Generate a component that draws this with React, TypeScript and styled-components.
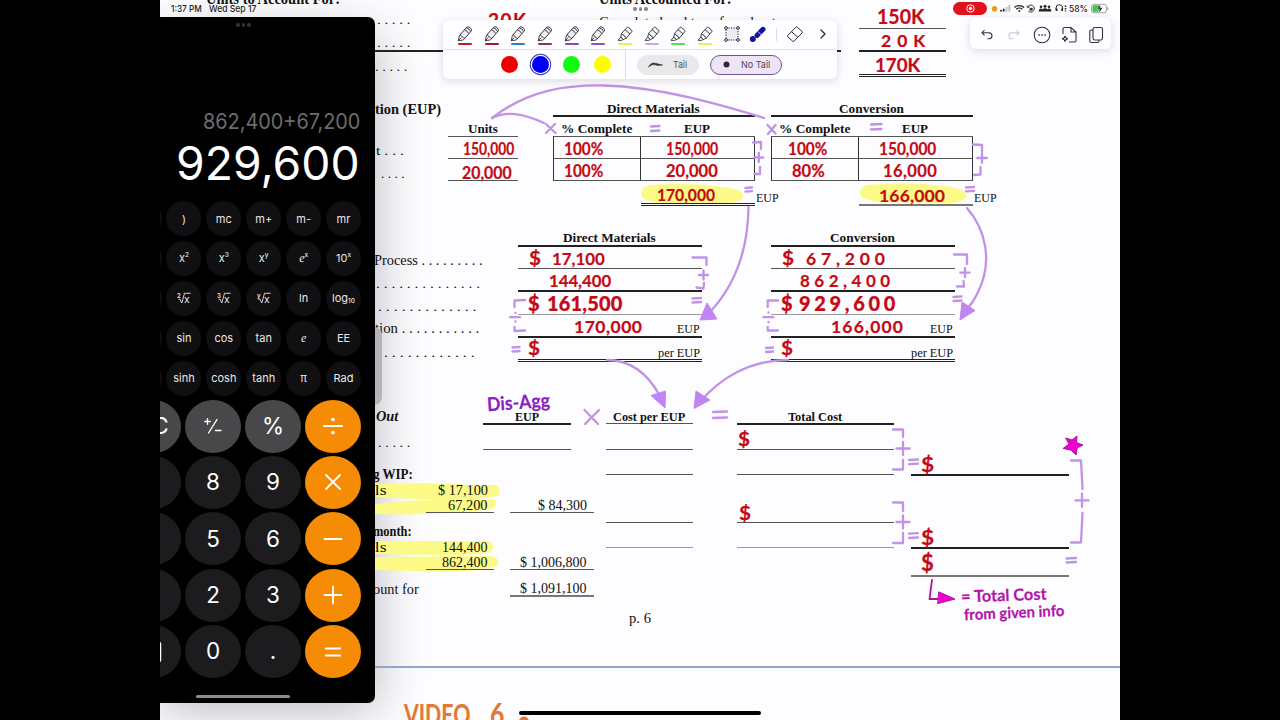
import React, { useLayoutEffect, useRef, useState } from 'react';
import styled, { createGlobalStyle, css } from 'styled-components';

const SERIF = '"Liberation Serif", "Times New Roman", serif';
const SANS = 'Inter, "Liberation Sans", sans-serif';
const HAND = 'Lato, "Open Sans", sans-serif';
const RED = '#c40a14';
const LILAC = '#c193e6';

const Global = createGlobalStyle`
  *, *::before, *::after { box-sizing: border-box; }
  body { margin: 0; background: #000; overflow: hidden; }
`;

/* ---------- text that fills a given width ---------- */

const FitBox = styled.span<{ $w: number; $ml?: number; $up?: number; $tilt?: number }>`
  display: block;
  flex: none;
  width: ${p => p.$w}px;
  margin-left: ${p => p.$ml || 0}px;
  margin-bottom: ${p => p.$up || 0}px;
  transform: rotate(${p => p.$tilt || 0}deg);
  white-space: pre;
  line-height: 1;
`;

const FitInner = styled.span`
  display: inline-block;
  vertical-align: top;
  transform-origin: 0 50%;
`;

const PrintBox = styled(FitBox)<{ $size?: number; $bold?: boolean; $italic?: boolean }>`
  font-family: ${SERIF};
  font-size: ${p => p.$size || 13.5}px;
  font-weight: ${p => (p.$bold ? 700 : 400)};
  font-style: ${p => (p.$italic ? 'italic' : 'normal')};
  color: #111;
`;

const InkBox = styled(FitBox)<{ $size?: number; $color?: string; $heavy?: boolean }>`
  font-family: ${HAND};
  font-size: ${p => p.$size || 17.5}px;
  font-weight: ${p => (p.$heavy ? 900 : 700)};
  color: ${p => p.$color || RED};
  -webkit-text-stroke: 0.2px ${p => p.$color || RED};
`;

const UiBox = styled(FitBox)<{ $size?: number; $color?: string; $weight?: number }>`
  font-family: ${SANS};
  font-size: ${p => p.$size || 10}px;
  font-weight: ${p => p.$weight || 400};
  color: ${p => p.$color || '#fff'};
`;

/* Narrow text is squeezed; wide handwriting is spread letter by letter. */
function Fitted({ text, spread }: { text: string; spread?: boolean }) {
  const ref = useRef<HTMLSpanElement>(null);
  const [fit, setFit] = useState<React.CSSProperties>({});
  useLayoutEffect(() => {
    const el = ref.current;
    if (!el || !el.parentElement) return;
    const target = el.parentElement.offsetWidth;
    const natural = el.offsetWidth;
    if (spread && target > natural && text.length > 1) {
      setFit({ letterSpacing: `${(target - natural) / (text.length - 1)}px` });
    } else {
      setFit({ transform: `scaleX(${target / natural})` });
    }
  }, [text, spread]);
  return <FitInner ref={ref} style={fit}>{text}</FitInner>;
}

type Common = { t: string; w: number; ml?: number; up?: number; tilt?: number; size?: number };

const Print = ({ t, w, ml, up, tilt, size, bold, italic }: Common & { bold?: boolean; italic?: boolean }) => (
  <PrintBox $w={w} $ml={ml} $up={up} $tilt={tilt} $size={size} $bold={bold} $italic={italic}><Fitted text={t} /></PrintBox>
);
const Ink = ({ t, w, ml, up, tilt, size, color, heavy }: Common & { color?: string; heavy?: boolean }) => (
  <InkBox $w={w} $ml={ml} $up={up} $tilt={tilt} $size={size} $color={color} $heavy={heavy}><Fitted text={t} spread /></InkBox>
);
const Ui = ({ t, w, ml, up, size, color, weight }: Common & { color?: string; weight?: number }) => (
  <UiBox $w={w} $ml={ml} $up={up} $size={size} $color={color} $weight={weight}><Fitted text={t} /></UiBox>
);

/* ---------- page shell ---------- */

const Stage = styled.div`
  width: 1280px;
  height: 720px;
  display: flex;
  justify-content: center;
  background: #000;
`;

const Tablet = styled.div`
  position: relative;
  width: 960px;
  height: 720px;
  overflow: hidden;
  background: #fdfcfe;
`;

const Sheet = styled.main`
  position: relative;
  display: flex;
  flex-direction: column;
`;

const Section = styled.section<{ $h: number; $pl?: number }>`
  display: flex;
  align-items: flex-start;
  flex: none;
  height: ${p => p.$h}px;
  padding-left: ${p => p.$pl || 0}px;
`;

const Column = styled.div<{ $w: number; $ml?: number; $pt?: number }>`
  display: flex;
  flex-direction: column;
  flex: none;
  width: ${p => p.$w}px;
  margin-left: ${p => p.$ml || 0}px;
  padding-top: ${p => p.$pt || 0}px;
`;

type Rule = 'thin' | 'thick' | 'double' | 'soft' | 'gray';
const rules: Record<Rule, string> = {
  thin: '1px solid #555',
  thick: '2px solid #222',
  double: '3px double #222',
  soft: '1px solid #999',
  gray: '2px solid #777',
};

const Row = styled.div<{ $h: number; $rule?: Rule; $w?: number; $ml?: number; $pad?: number; $end?: boolean }>`
  display: flex;
  align-items: flex-end;
  justify-content: ${p => (p.$end ? 'flex-end' : 'flex-start')};
  flex: none;
  height: ${p => p.$h}px;
  width: ${p => (p.$w ? `${p.$w}px` : 'auto')};
  margin-left: ${p => p.$ml || 0}px;
  padding-right: ${p => p.$pad || 0}px;
  border-bottom: ${p => (p.$rule ? rules[p.$rule] : 'none')};
`;

const Cell = styled(Row)<{ $first?: boolean }>`
  border-right: 1px solid #333;
  ${p => p.$first && css`border-left: 1px solid #333;`}
`;

const Pair = styled.div`
  display: flex;
  align-items: flex-end;
`;

const PageEdge = styled.hr`
  width: 100%;
  height: 2px;
  margin: 0;
  border: 0;
  background: #8fa8c9;
`;

const Layer = styled.svg`
  position: absolute;
  left: 0;
  top: 0;
  pointer-events: none;
`;

const Note = styled.div<{ $x: number; $y: number }>`
  position: absolute;
  left: ${p => p.$x - 160}px;
  top: ${p => p.$y}px;
  display: flex;
`;

/* ---------- worksheet sections ---------- */

const dots = (n: number) => Array(n).fill('.').join(' ');

function UnitsSection() {
  return (
    <Section $h={100} $pl={46}>
      <Column $w={282}>
        <Row $h={7}><Print t="Units to Account For:" w={134} size={16} bold /></Row>
        <Row $h={19}><Print t="Beginning Work in P" w={134} size={15} up={-4} /><Print t={dots(5)} w={33} ml={37} /></Row>
        <Row $h={26} $rule="thick"><Print t={dots(5)} w={33} ml={171} up={1} /></Row>
        <Row $h={21}><Print t={dots(5)} w={32} ml={169} /></Row>
      </Column>
      <Column $w={60} $pt={9}>
        <Row $h={20}><Ink t="20K" w={38} size={19} /></Row>
      </Column>
      <Column $w={242} $ml={51}>
        <Row $h={7}><Print t="Units Accounted For:" w={133} size={16} bold /></Row>
        <Row $h={19}><Print t="Completed and transferred out" w={177} size={15} up={-4} /></Row>
        <Row $h={26} $rule="thick" />
      </Column>
      <Column $w={87} $ml={18}>
        <Row $h={29} $rule="thin"><Ink t="150K" w={48} ml={18} up={2} size={20} /></Row>
        <Row $h={23} $rule="thick"><Ink t="20K" w={44} ml={22} up={1} size={17.5} /></Row>
        <Row $h={25} $rule="double"><Ink t="170K" w={45} ml={16} size={19.5} /></Row>
      </Column>
    </Section>
  );
}

type EupProps = { title: string; titleX: number; titleW: number; ml: number; rows: [string, number, number, string, number, number][]; total: [string, number, number]; rule: Rule };

function EupTable({ title, titleX, titleW, ml, rows, total, rule }: EupProps) {
  return (
    <Column $w={202} $ml={ml}>
      <Row $h={17} $rule="thick"><Print t={title} w={titleW} ml={titleX} bold /></Row>
      <Row $h={20} $rule="thin"><Print t="% Complete" w={71} ml={8} bold up={1} /><Print t="EUP" w={26} ml={52} bold up={1} /></Row>
      {rows.map(([pct, px, pw, units, ux, uw], i) => (
        <Pair key={i}>
          <Cell $first $h={22} $w={88} $rule="thin"><Ink t={pct} w={pw} ml={px} up={1} size={16.5} /></Cell>
          <Cell $h={22} $w={114} $rule="thin"><Ink t={units} w={uw} ml={ux} up={1} size={16.5} /></Cell>
        </Pair>
      ))}
      <Pair>
        <Row $h={25} $w={114} $ml={88} $rule={rule}><Ink t={total[0]} w={total[2]} ml={total[1]} size={17.5} /></Row>
        <Print t="EUP" w={23} ml={1} up={2} />
      </Pair>
    </Column>
  );
}

function EquivalentUnits() {
  return (
    <Section $h={130} $pl={215}>
      <Column $w={66}>
        <Row $h={16}><Print t="tion (EUP)" w={66} size={15.5} bold /></Row>
        <Row $h={41}><Print t="t . . ." w={28} ml={1} /></Row>
        <Row $h={23}><Print t={dots(4)} w={24} ml={6} /></Row>
      </Column>
      <Column $w={70} $ml={7}>
        <Row $h={37} $rule="thin"><Print t="Units" w={30} ml={20} bold up={1} /></Row>
        <Row $h={22} $rule="thin"><Ink t="150,000" w={51} ml={15} up={1} size={16.5} /></Row>
        <Row $h={22} $rule="thin"><Ink t="20,000" w={50} ml={14} up={-1} size={16.5} /></Row>
      </Column>
      <EupTable title="Direct Materials" titleX={54} titleW={93} ml={35} rule="double"
        rows={[['100%', 10, 39, '150,000', 25, 52], ['100%', 10, 39, '20,000', 25, 52]]} total={['170,000', 16, 58]} />
      <EupTable title="Conversion" titleX={68} titleW={65} ml={16} rule="gray"
        rows={[['100%', 16, 39, '150,000', 20, 57], ['80%', 20, 33, '16,000', 24, 54]]} total={['166,000', 20, 66]} />
    </Section>
  );
}

type CostItem = { text: string; x: number; w: number };
function CostTable({ title, titleX, titleW, ml, items }: { title: string; titleX: number; titleW: number; ml: number; items: CostItem[] }) {
  const [a, b, c, d] = items;
  return (
    <Column $w={184} $ml={ml}>
      <Row $h={17} $rule="thick"><Print t={title} w={titleW} ml={titleX} bold up={1} /></Row>
      <Row $h={22} $rule="thin"><Ink t="$" w={12} ml={11} up={1} size={19} /><Ink t={a.text} w={a.w} ml={a.x - 23} up={1} size={17.5} /></Row>
      <Row $h={23} $rule="thick"><Ink t={b.text} w={b.w} ml={b.x} up={1} size={17} /></Row>
      <Row $h={23} $rule="soft"><Ink t="$" w={12} ml={10} up={1} size={20} heavy /><Ink t={c.text} w={c.w} ml={c.x - 22} up={1} size={20} heavy /></Row>
      <Row $h={23} $rule="thick"><Ink t={d.text} w={d.w} ml={d.x} up={1} size={17.5} /><Print t="EUP" w={23} ml={159 - d.x - d.w} up={1} /></Row>
      <Row $h={24} $rule="double"><Ink t="$" w={12} ml={10} up={2} size={19} /><Print t="per EUP" w={42} ml={118} /></Row>
    </Column>
  );
}

function CostPerUnit() {
  return (
    <Section $h={170} $pl={214}>
      <Column $w={110}>
        <Row $h={37}><Print t={`Process ${dots(9)}`} w={109} size={14.5} /></Row>
        <Row $h={23}><Print t={dots(14)} w={104} ml={2} /></Row>
        <Row $h={23}><Print t={dots(13)} w={98} ml={4} /></Row>
        <Row $h={22}><Print t={`tion ${dots(11)}`} w={104} ml={1} size={14.5} /></Row>
        <Row $h={24}><Print t={dots(12)} w={91} ml={10} /></Row>
      </Column>
      <Column $w={437} $ml={34}>
        <Pair>
          <CostTable title="Direct Materials" titleX={45} titleW={93} ml={0}
            items={[{ text: '17,100', x: 34, w: 53 }, { text: '144,400', x: 31, w: 62 }, { text: '161,500', x: 29, w: 75 }, { text: '170,000', x: 56, w: 68 }]} />
          <CostTable title="Conversion" titleX={59} titleW={65} ml={69}
            items={[{ text: '67,200', x: 35, w: 79 }, { text: '862,400', x: 29, w: 90 }, { text: '929,600', x: 28, w: 96 }, { text: '166,000', x: 60, w: 72 }]} />
        </Pair>
      </Column>
    </Section>
  );
}

function LedgerRow({ h, label, lw, ll, bold, amount, aw, total, tw, aRule, tRule }: { h: number; label?: string; lw?: number; ll?: number; bold?: boolean; amount?: string; aw?: number; total?: string; tw?: number; aRule?: Rule; tRule?: Rule }) {
  return (
    <Pair>
      <Row $h={h} $w={50}>{label && <Print t={label} w={lw || 20} ml={ll === undefined ? -2 : ll} bold={bold} size={14} />}</Row>
      <Row $h={h} $w={68} $ml={1} $end $pad={6} $rule={aRule}>{amount && <Print t={amount} w={aw || 46} size={14} up={aRule ? -1 : 0} />}</Row>
      <Row $h={h} $w={84} $ml={16} $end $pad={7} $rule={tRule}>{total && <Print t={total} w={tw || 67} size={14} up={-1} />}</Row>
    </Pair>
  );
}

function Assignment() {
  return (
    <Section $h={208} $pl={215}>
      <Column $w={219}>
        <Row $h={25}>
          <Print t="Out" w={22} ml={1} size={15} bold italic up={1} />
          <Row $h={25} $w={88} $ml={85} $rule="thick"><Print t="EUP" w={24} ml={32} bold /></Row>
        </Row>
        <Row $h={25}>
          <Print t={dots(5)} w={32} ml={3} up={1} />
          <Row $h={25} $w={88} $ml={73} $rule="thin" />
        </Row>
        <LedgerRow h={32} label="g WIP:" lw={40} bold />
        <LedgerRow h={16} label="als" ll={-8} amount="$ 17,100" aw={50} />
        <LedgerRow h={15} amount="67,200" aw={40} total="$ 84,300" tw={49} aRule="thin" tRule="thin" />
        <LedgerRow h={26} label="month:" lw={39} bold />
        <LedgerRow h={16} label="als" ll={-8} amount="144,400" />
        <LedgerRow h={15} amount="862,400" total="$ 1,006,800" aRule="thin" tRule="thin" />
        <LedgerRow h={27} label="ount for" lw={46} total="$ 1,091,100" tRule="gray" />
      </Column>
      <Column $w={87} $ml={12}>
        <Row $h={24} $rule="thin"><Print t="Cost per EUP" w={72} ml={7} bold /></Row>
        <Row $h={26} $rule="thin" />
        <Row $h={25} $rule="thin" />
        <Row $h={48} $rule="thin" />
        <Row $h={25} $rule="soft" />
      </Column>
      <Column $w={157} $ml={44}>
        <Row $h={25} $rule="thick"><Print t="Total Cost" w={54} ml={51} bold /></Row>
        <Row $h={25} $rule="thin"><Ink t="$" w={12} ml={1} up={1} size={19} /></Row>
        <Row $h={25} $rule="thin" />
        <Row $h={48} $rule="thin"><Ink t="$" w={12} ml={2} size={19} /></Row>
        <Row $h={25} $rule="soft" />
      </Column>
      <Column $w={158} $ml={17}>
        <Row $h={76} $rule="thick"><Ink t="$" w={13} ml={10} size={21} /></Row>
        <Row $h={73} $rule="thick"><Ink t="$" w={13} ml={10} size={21} /></Row>
        <Row $h={28} $rule="gray"><Ink t="$" w={13} ml={10} up={1} size={22} /></Row>
      </Column>
    </Section>
  );
}

/* ---------- highlighter and pen strokes ---------- */

function Highlights() {
  return (
    <Layer width="960" height="720" viewBox="160 0 960 720">
      <g fill="#fbfa86">
        <path d="M650 185 Q690 182 722 187 Q744 189 743 196 Q742 203 722 204 L670 204 Q640 203 641 193 Q642 186 650 185Z" />
        <path d="M868 185 Q905 181 945 186 Q966 189 967 196 Q964 203 946 203 L880 202 Q860 200 860 193 Q860 187 868 185Z" />
        <path d="M375 484 Q430 482 470 485 L496 485 Q502 489 498 496 Q470 501 440 500 L375 497Z" />
        <path d="M375 504 Q420 499 460 500 L494 499 Q499 503 492 509 Q440 516 375 514Z" />
        <path d="M375 541 L488 541 Q496 544 492 551 Q486 555 440 555 L375 554Z" />
        <path d="M375 557 L493 556 Q502 561 496 567 Q470 572 440 572 L375 570Z" />
      </g>
    </Layer>
  );
}

const plus = (x: number, y: number, r: number) => `M${x - r} ${y}H${x + r}M${x} ${y - r}V${y + r}`;
const equals = (x1: number, x2: number, y1: number, y2: number) => `M${x1} ${y1}L${x2} ${y1 - 0.5}M${x1} ${y2}L${x2} ${y2 - 0.5}`;

function PenStrokes() {
  return (
    <Layer width="960" height="720" viewBox="160 0 960 720">
      <g fill="none" stroke={LILAC} strokeWidth="2.300" strokeLinecap="round" strokeLinejoin="round">
        <path d="M492 118C528 90 565 85 604 85.500C660 87 722 105 764 118" />
        <path d="M492 118C506 111 522 113 544 123" />
        <path d="M546 124L555.500 133M555 124L546 133M767.500 125L775.500 133.500M775.500 125L768 134" />
        <path d={equals(651, 659.5, 126.5, 131) + equals(871, 881.5, 124.5, 129.5)} />
        <path d={'M753 142.500L761 142V149' + plus(758.8, 157.5, 4.5) + 'M760 167V174H754.500'} />
        <path d={'M973 144.500L982 145V151.500' + plus(982, 158, 4.8) + 'M980.500 167V174.500L974 175'} />
        <path d={equals(745.5, 752, 188, 191.7) + equals(966, 974, 187.5, 191.3)} />
        <path d="M748.500 207C748 245 738 282 710 312" />
        <path d="M967 208C986 230 993 262 978 292C975 299 972 303 968 308" />
        <path d={'M692.500 257.500H706.500V265' + plus(703.5, 275, 4.6) + 'M704 283L703.500 288.500L696.500 287.500' + equals(692.5, 701, 298.5, 302.5)} />
        <path d="M525 300L514.500 300.500V307M510 317.200H520M515.500 313V313.200M515.500 321.500V321.700M514.500 327V331L525 330.500" />
        <path d={equals(512.5, 519.5, 347.5, 351.5)} />
        <path d={'M954 254.500H967V264' + plus(965, 272.7, 4.6) + 'M963.500 281L964 286.500H957' + equals(953.5, 961.5, 297, 301)} />
        <path d="M778 300.500H767.700V307M763.500 317.200H773.500M768.500 312.500V312.700M768.500 322V322.200M767.700 327V330.500H778" />
        <path d={equals(766, 773, 348, 352)} />
        <path d="M607 360C630 360 648 374 660 396" />
        <path d="M788 360C750 360 720 378 700 402" />
        <path d="M584.500 410L598 424M599 410L585 424" />
        <path d={equals(713, 727, 412, 418)} />
        <path d={'M893 429.500H903V437' + plus(903, 448.5, 6.6) + 'M903 460V469.500H893' + equals(909, 918, 460, 464.2)} />
        <path d={'M893 502.500H903V511' + plus(903, 522, 6.6) + 'M903 533V543H893' + equals(909, 918, 533.7, 538)} />
        <path d={'M1071 460.500H1081L1082.500 489' + plus(1082, 500.3, 6.6) + 'M1082.500 513L1081 542.500H1071' + equals(1066.5, 1076, 558.5, 562.5)} />
      </g>
      <g fill="#c184f3" stroke="#c184f3" strokeWidth="1" strokeLinejoin="round">
        <path d="M700 320L707 303L717 319Z" />
        <path d="M960 320L962 302L975 310.500Z" />
        <path d="M665 408L651 395.500L665.500 391Z" />
        <path d="M694 408.500L696 391L710 400Z" />
      </g>
      <path d="M1077 436L1076.500 442.500L1083 445L1077.200 447.800L1076 455L1071 450L1063 448.500L1069 444L1065.500 438L1072 440Z" fill="#ef00cf" stroke="#b0109f" strokeWidth="1" strokeLinejoin="round" />
      <g stroke="#b010a8" strokeWidth="1.800" strokeLinecap="round" strokeLinejoin="round">
        <path d="M932 580L929.500 599H938" fill="none" />
        <path d="M939 592L955 599L938 603.500Z" fill="#ef00cf" strokeWidth="1" />
      </g>
      <circle cx="524" cy="721.500" r="5" fill="#e07a35" />
    </Layer>
  );
}

/* ---------- status bar ---------- */

const Status = styled.header`
  position: absolute;
  left: 0;
  top: 0;
  width: 960px;
  height: 17px;
  padding: 0 11px;
  display: flex;
  align-items: center;
`;
const Spacer = styled.div`flex: 1;`;
const Recording = styled.div`
  width: 34px;
  height: 13px;
  border-radius: 7px;
  background: #e0131a;
  display: grid;
  place-items: center;
`;

function StatusBar() {
  return (
    <Status>
      <Ui t="1:37 PM" w={31} size={9.3} weight={500} color="#222" />
      <Ui t="Wed Sep 17" w={47} ml={7} size={9.3} weight={500} color="#222" />
      <Spacer />
      <Recording>
        <svg width="9" height="9" viewBox="0 0 9 9"><circle cx="4.500" cy="4.500" r="3.700" fill="none" stroke="#fff" /><circle cx="4.500" cy="4.500" r="1.700" fill="#fff" /></svg>
      </Recording>
      <svg width="122" height="17" viewBox="987 0 122 17" fill="none" stroke="#222">
        <circle cx="994.500" cy="8.800" r="2.800" fill="#f29a18" stroke="none" />
        <path d="M1001 10v1.500M1003.700 8.800v2.700" strokeWidth="1.800" />
        <path d="M1006.500 7v4.500M1009.300 5v6.500" strokeWidth="1.800" stroke="#bbb" />
        <path d="M1014.500 7.500a7 7 0 0 1 9.600 0M1016.300 9.300a4.300 4.300 0 0 1 6 0" strokeWidth="1.300" />
        <circle cx="1019.300" cy="11" r="1" fill="#222" stroke="none" />
        <path d="M1027.600 7.200a3.500 3.500 0 1 1 .6 3.700M1027 5.500l.7 2l1.900-.5" strokeWidth="0.900" />
        <path d="M1029.900 8.200h2.500v2h-2.500z" fill="#222" strokeWidth="0.500" />
        <g fill="#222" stroke="none"><circle cx="1041" cy="6.800" r="1.300" /><circle cx="1045" cy="6.300" r="1.500" /><circle cx="1049" cy="6.800" r="1.300" /><path d="M1038.700 11.500q0-3 2.300-3q1.200 0 1.500 1q.8-1.200 2.500-1.200t2.500 1.200q.3-1 1.500-1q2.300 0 2.300 3z" /></g>
        <path d="M1056 10.500V8a3.300 3.300 0 0 1 6.600 0v2.500" strokeWidth="1" />
        <path d="M1056.700 8.500v2.500M1062 8.500v2.500" strokeWidth="1.500" />
        <path d="M1065.500 5.500v6" strokeWidth="1.500" strokeDasharray="1.500 1" />
        <text x="1069" y="11.700" textLength="19" lengthAdjust="spacingAndGlyphs" fontFamily="Inter, sans-serif" fontSize="9" fontWeight="500" fill="#222" stroke="none">58%</text>
        <rect x="1091.500" y="4.300" width="15" height="8.400" rx="2.400" stroke="#999" strokeWidth="0.900" />
        <rect x="1092.500" y="5.300" width="8" height="6.400" rx="1.500" fill="#35c759" stroke="none" />
        <path d="M1107.800 7.300v2.600" stroke="#999" />
        <path d="M1100.800 3.800l-4 5.200h2.700l-.9 4.200l4.200-5.400h-2.800z" fill="#111" stroke="#fff" strokeWidth="0.500" />
      </svg>
    </Status>
  );
}

/* ---------- floating tool bars ---------- */

const Floating = styled.div<{ $x: number; $y: number; $w: number; $h: number }>`
  position: absolute;
  left: ${p => p.$x - 160}px;
  top: ${p => p.$y}px;
  width: ${p => p.$w}px;
  height: ${p => p.$h}px;
  display: flex;
  flex-direction: column;
  border-radius: 6px;
  background: #fefdff;
  box-shadow: 0 2px 9px rgba(60, 50, 80, 0.17);
`;
const Tools = styled.div`
  display: flex;
  align-items: center;
  height: 30px;
  padding-left: 8.500px;
  border-bottom: 1px solid #e4e2e8;
`;
const Tool = styled.div<{ $ink?: string; $w?: number }>`
  display: flex;
  flex-direction: column;
  align-items: center;
  width: ${p => p.$w || 26.7}px;
  &::after {
    content: '';
    width: 14px;
    height: 2px;
    border-radius: 1px;
    background: ${p => p.$ink || 'transparent'};
  }
`;
const Divider = styled.div<{ $h: number; $ml?: number }>`
  width: 1px;
  height: ${p => p.$h}px;
  margin-left: ${p => p.$ml || 0}px;
  background: #dddbe2;
`;
const Options = styled.div`
  display: flex;
  align-items: center;
  height: 29px;
  padding-left: 58px;
`;
const Swatch = styled.div<{ $c: string; $on?: boolean }>`
  width: 17px;
  height: 17px;
  margin-right: 14px;
  border-radius: 50%;
  background: ${p => p.$c};
  ${p => p.$on && css`box-shadow: 0 0 0 1.200px #fff, 0 0 0 2.200px #3b35a5;`}
`;
const Chip = styled.div<{ $w: number; $on?: boolean }>`
  display: flex;
  align-items: center;
  width: ${p => p.$w}px;
  height: 20px;
  margin-left: 11px;
  padding-left: ${p => (p.$on ? 12 : 10)}px;
  border-radius: 10px;
  border: 1px solid ${p => (p.$on ? '#73558c' : '#e9e8eb')};
  background: ${p => (p.$on ? '#eee4f7' : '#e9e8eb')};
`;

const PenIcon = () => (
  <svg width="18" height="18" viewBox="0 0 18 18" fill="#eeeef3" stroke="#2a2a33" strokeWidth="0.900" strokeLinejoin="round">
    <path d="M2.300 15.800l1-5l2-2.500l4.400 4l-2.300 2.600z" fill="#fff" />
    <path d="M4.500 9.200l6.200-7q1-.9 2.200-.3l2.300 1.900q.8.900.1 2.100l-5.900 6.900q-.9.800-1.900 0l-2.600-2.100q-.9-.6-.4-1.500z" />
    <path d="M8.400 4.800q3 .8 4.200 3.800M10.300 2.800q3.300.8 4.300 3.700M2.300 15.800l3-3.300" fill="none" />
  </svg>
);
const MarkerIcon = () => (
  <svg width="18" height="18" viewBox="0 0 18 18" fill="#eeeef3" stroke="#2a2a33" strokeWidth="0.900" strokeLinejoin="round">
    <path d="M2 15.300l2.800-3.200l2.700 2.400l-2 .9z" fill="#fff" />
    <path d="M4.800 12.100l.7-3.600l5 4.400l-3 1.600z" fill="#fff" />
    <path d="M5.500 8.500l5.400-6q.8-.6 1.500-.2l3.300 3q.6.700.1 1.400l-5.300 6.200z" fill="#f4f3f7" />
    <path d="M9 4.600l4.900 4.300" fill="none" />
  </svg>
);
const LassoIcon = () => (
  <svg width="18" height="18" viewBox="0 0 18 18" fill="#fff" stroke="#2a2a33" strokeWidth="1">
    <rect x="3" y="3" width="12" height="12" fill="#ededf1" strokeDasharray="1.300 1.200" />
    <circle cx="3" cy="3" r="1.400" /><circle cx="15" cy="3" r="1.400" /><circle cx="3" cy="15" r="1.400" /><circle cx="15" cy="15" r="1.400" />
  </svg>
);
const LaserIcon = () => (
  <svg width="18" height="18" viewBox="0 0 18 18" fill="#14149a" stroke="#14149a">
    <circle cx="3.800" cy="14" r="2.600" />
    <path d="M8 10.400l6-6.100" strokeWidth="5" strokeLinecap="round" />
    <path d="M9 6.500l3.500 3.500" stroke="#d9d9f5" strokeWidth="0.900" />
  </svg>
);
const EraserIcon = () => (
  <svg width="18" height="18" viewBox="0 0 18 18" fill="#fff" stroke="#2a2a33" strokeWidth="1" strokeLinejoin="round">
    <path d="M1.800 10.500l8-8.300q.8-.6 1.500 0l4.800 4.300q.6.700 0 1.400l-8 8.200q-.8.600-1.500 0l-4.800-4.300q-.6-.7 0-1.300z" />
    <path d="M5.500 6.700l6.400 5.600" fill="none" />
  </svg>
);

function MarkupBar() {
  const pens = ['#c4182a', '#a8162a', '#2f7dc0', '#9b2f42', '#8a46bf', '#9050c4'];
  const markers = ['#e9ee58', '#cba9e8', '#58dc5c', '#e9ea5c'];
  return (
    <Floating $x={443} $y={20} $w={394} $h={59}>
      <Tools>
        {pens.map((c, i) => <Tool key={i} $ink={c}><PenIcon /></Tool>)}
        {markers.map((c, i) => <Tool key={i} $ink={c}><MarkerIcon /></Tool>)}
        <Tool><LassoIcon /></Tool>
        <Tool><LaserIcon /></Tool>
        <Divider $h={13} $ml={4} />
        <Tool $w={36}><EraserIcon /></Tool>
        <Tool $w={20}><svg width="18" height="18" viewBox="0 0 18 18" fill="none" stroke="#2a2a33" strokeWidth="1.300"><path d="M7 5l4 4l-4 4" strokeLinecap="round" strokeLinejoin="round" /></svg></Tool>
      </Tools>
      <Options>
        <Swatch $c="#ec0000" /><Swatch $c="#0000f5" $on /><Swatch $c="#12fa12" /><Swatch $c="#fdfd00" />
        <Divider $h={29} />
        <Chip $w={62}>
          <svg width="15" height="8" viewBox="0 0 15 8"><path d="M.5 6Q3 1 7.500 2.300T14.500 4Q10 5 7 3.800T.5 6Z" fill="#333" stroke="#333" strokeWidth="0.600" /></svg>
          <Ui t="Tail" w={14} ml={10} up={-1} size={9.3} color="#55545a" />
        </Chip>
        <Chip $w={72} $on>
          <svg width="7" height="7" viewBox="0 0 7 7"><circle cx="3.500" cy="3.500" r="3" fill="#2f2b36" /></svg>
          <Ui t="No Tail" w={29} ml={11} up={-1} size={9.3} color="#4c4753" />
        </Chip>
      </Options>
    </Floating>
  );
}

const ActionRow = styled.div`
  display: flex;
  align-items: center;
  justify-content: space-between;
  height: 100%;
  padding: 2px 6px 0 8px;
`;

function ActionBar() {
  return (
    <Floating $x={970} $y={18} $w={141} $h={31}>
      <ActionRow>
        <svg width="18" height="18" viewBox="0 0 18 18" fill="none" stroke="#33323a" strokeWidth="1.100"><path d="M6.500 4L4 6.700L6.500 9.400M4 6.700h7q3 .2 3 3t-3 3H9.500" /></svg>
        <svg width="18" height="18" viewBox="0 0 18 18" fill="none" stroke="#c9c8ce" strokeWidth="1.100"><path d="M11.500 4L14 6.700L11.500 9.400M14 6.700H7q-3 .2-3 3t3 3h1.500" /></svg>
        <svg width="18" height="18" viewBox="0 0 18 18" fill="none" stroke="#33323a" strokeWidth="1.100"><circle cx="9" cy="9" r="7.800" /><path d="M5.300 9h1.500M8.300 9h1.500M11.300 9h1.500" strokeWidth="1.600" /></svg>
        <svg width="18" height="18" viewBox="0 0 18 18" fill="none" stroke="#33323a" strokeWidth="1.100"><path d="M3 8V3q0-1.500 1.500-1.500H11L16 6v8.500q0 1.500-1.500 1.500H9M11 1.500V6h5M5 9.800q.3 2.900 3 3q-2.700.2-3 3q-.3-2.800-3-3q2.700-.2 3-3z" /></svg>
        <svg width="18" height="18" viewBox="0 0 18 18" fill="none" stroke="#33323a" strokeWidth="1.100"><rect x="6" y="1.500" width="9.500" height="12.500" rx="1.800" /><path d="M6 4H4.300Q2.800 4 2.800 5.500v9.500q0 1.500 1.500 1.500h6.200q1.500 0 1.500-1.500v-1" /></svg>
      </ActionRow>
    </Floating>
  );
}

/* ---------- calculator window ---------- */

const Calculator = styled.aside`
  position: absolute;
  left: 0;
  top: 17px;
  width: 215px;
  height: 686px;
  display: flex;
  flex-direction: column;
  align-items: flex-end;
  overflow: hidden;
  border-radius: 0 7px 7px 0;
  background: #000;
`;
const CalculatorShade = styled.div`
  position: absolute;
  left: 0;
  top: 30px;
  width: 215px;
  height: 673px;
  border-radius: 7px;
  box-shadow: 0 6px 50px rgba(40, 35, 50, 0.32);
`;
const SlideHandle = styled.div`
  position: absolute;
  left: 206px;
  top: 327px;
  width: 16px;
  height: 78px;
  border-radius: 8px;
  background: #b5b4b8;
`;
const Grip = styled.div`
  display: flex;
  gap: 2px;
`;
const GripDot = styled.i<{ $c: string }>`
  width: 3.500px;
  height: 3.500px;
  border-radius: 50%;
  background: ${p => p.$c};
`;
const CalcTop = styled.div`
  align-self: flex-start;
  padding: 6px 0 0 76px;
  height: 92px;
`;
const Readout = styled.div<{ $h: number }>`
  display: flex;
  align-items: center;
  height: ${p => p.$h}px;
  padding-right: 15px;
`;
const Functions = styled.div`
  display: grid;
  grid-template-columns: repeat(6, 35px);
  grid-auto-rows: 35px;
  gap: 4.900px;
  margin: 11px 14px 0 0;
`;
const FnKey = styled.div<{ $serif?: boolean }>`
  display: flex;
  align-items: center;
  justify-content: center;
  border-radius: 50%;
  background: #100f11;
  color: #e8e8e8;
  font: ${p => (p.$serif ? `italic 12px ${SERIF}` : `400 11px ${SANS}`)};
  sup, sub { font: 500 6.500px/1 ${SANS}; align-self: center; }
  sup { margin-top: -7px; }
  sub { margin-bottom: -5px; }
`;
const EulerE = styled.i`
  font-family: ${SERIF};
  font-size: 12px;
`;
const Pad = styled.div`
  display: grid;
  grid-template-columns: repeat(4, 56px);
  grid-auto-rows: 53px;
  gap: 3.400px 4px;
  margin: 4px 14px 0 0;
`;
const PadKey = styled.div<{ $c: string }>`
  display: flex;
  align-items: center;
  justify-content: center;
  border-radius: 50%;
  background: ${p => p.$c};
  color: #fff;
  font: 400 22.500px/1 ${SANS};
`;
const HomeBar = styled.div`
  width: 94px;
  height: 3px;
  margin: 17px 85px 0 0;
  border-radius: 2px;
  background: #8c8b8d;
`;
const ScreenHomeBar = styled.div`
  position: absolute;
  left: 359px;
  top: 711px;
  width: 242px;
  height: 4px;
  border-radius: 2px;
  background: #000;
`;

const Root = ({ n }: { n: string }) => (
  <svg width="16" height="16" viewBox="0 0 16 16">
    <text x="1" y="7.500" fontFamily="Inter, sans-serif" fontSize="6" fontWeight="600" fill="#e8e8e8">{n}</text>
    <path d="M2.500 9.500L3.800 9l2 4L8.500 3.300H14.500" fill="none" stroke="#e8e8e8" strokeWidth="0.900" />
    <text x="8" y="12.800" fontFamily="Inter, sans-serif" fontSize="10.500" fill="#e8e8e8">x</text>
  </svg>
);

const opPaths: Record<string, string> = {
  '÷': 'M5 14H23',
  '×': 'M7 7L21 21M21 7L7 21',
  '−': 'M5.500 14H22.500',
  '+': 'M5.500 14H22.500M14 5.500V22.500',
  '=': 'M6.800 10.500H21.200M6.800 17.500H21.200',
};
const Op = ({ k }: { k: string }) => (
  <svg width="28" height="28" viewBox="0 0 28 28" fill="none" stroke="#fff" strokeWidth="1.900" strokeLinecap="round">
    <path d={opPaths[k]} />
    {k === '÷' && <><circle cx="14" cy="7.500" r="0.900" fill="#fff" /><circle cx="14" cy="20.500" r="0.900" fill="#fff" /></>}
  </svg>
);
const SignIcon = () => (
  <svg width="20" height="20" viewBox="0 0 20 20" fill="none" stroke="#fff" strokeWidth="1.400" strokeLinecap="round"><path d="M1.800 5.500h5.400M4.500 2.800v5.400M5.500 17L14 3.500M12.500 14.500h5.500" /></svg>
);
const CalcIcon = () => (
  <svg width="20" height="24" viewBox="0 0 20 24" fill="none" stroke="#fff" strokeWidth="1.500"><rect x="2" y="2" width="15.500" height="20" rx="2.500" /></svg>
);

const dark = '#1c1b1d';
const grey = '#48474a';
const orange = '#f68b06';

function CalculatorWindow() {
  const fn: React.ReactNode[] = [
    '', ')', 'mc', 'm+', 'm-', 'mr',
    '', <>x<sup>2</sup></>, <>x<sup>3</sup></>, <>x<sup>y</sup></>, <><EulerE>e</EulerE><sup>x</sup></>, <>10<sup>x</sup></>,
    '', <Root n="2" />, <Root n="3" />, <Root n="y" />, 'ln', <>log<sub>10</sub></>,
    '', 'sin', 'cos', 'tan', 'e', 'EE',
    '', 'sinh', 'cosh', 'tanh', 'π', 'Rad',
  ];
  const pad: [React.ReactNode, string][] = [
    ['AC', grey], [<SignIcon />, grey], ['%', grey], [<Op k="÷" />, orange],
    ['', dark], ['8', dark], ['9', dark], [<Op k="×" />, orange],
    ['', dark], ['5', dark], ['6', dark], [<Op k="−" />, orange],
    ['', dark], ['2', dark], ['3', dark], [<Op k="+" />, orange],
    [<CalcIcon />, dark], ['0', dark], ['.', dark], [<Op k="=" />, orange],
  ];
  return (
    <Calculator>
      <CalcTop><Grip><GripDot $c="#333" /><GripDot $c="#333" /><GripDot $c="#333" /></Grip></CalcTop>
      <Readout $h={26}><Ui t="862,400+67,200" w={157} size={21.5} color="#6d6c6e" /></Readout>
      <Readout $h={55}><Ui t="929,600" w={184} size={47} /></Readout>
      <Functions>{fn.map((k, i) => <FnKey key={i} $serif={k === 'e'}>{k}</FnKey>)}</Functions>
      <Pad>{pad.map(([k, c], i) => <PadKey key={i} $c={c}>{k}</PadKey>)}</Pad>
      <HomeBar />
    </Calculator>
  );
}

const TopGrip = styled(Grip)`
  position: absolute;
  left: 473px;
  top: 7px;
`;

export default function App() {
  return (
    <Stage>
      <Global />
      <Tablet>
        <CalculatorShade />
        <Highlights />
        <Sheet>
          <UnitsSection />
          <EquivalentUnits />
          <CostPerUnit />
          <Assignment />
          <Section $h={58} $pl={469}><Column $w={22}><Row $h={18}><Print t="p. 6" w={22} size={14} /></Row></Column></Section>
          <PageEdge />
          <Section $h={52} $pl={244}>
            <Column $w={66} $pt={31}><Ink t="VIDEO" w={66} size={29} color="#e07a35" /></Column>
            <Column $w={14} $ml={20} $pt={30}><Ink t="6" w={14} size={30} color="#e07a35" /></Column>
          </Section>
        </Sheet>
        <PenStrokes />
        <Note $x={487} $y={392}><Ink t="Dis-Agg" w={63} size={19} tilt={-4} color="#8a1fc0" /></Note>
        <Note $x={961} $y={587}><Ink t="= Total Cost" w={86} size={16.5} tilt={-2} color="#b312ad" /></Note>
        <Note $x={964} $y={605}><Ink t="from given info" w={100} size={15.5} tilt={-2.5} color="#b312ad" /></Note>
        <StatusBar />
        <TopGrip><GripDot $c="#888" /><GripDot $c="#888" /><GripDot $c="#888" /></TopGrip>
        <MarkupBar />
        <ActionBar />
        <SlideHandle />
        <CalculatorWindow />
        <ScreenHomeBar />
      </Tablet>
    </Stage>
  );
}
